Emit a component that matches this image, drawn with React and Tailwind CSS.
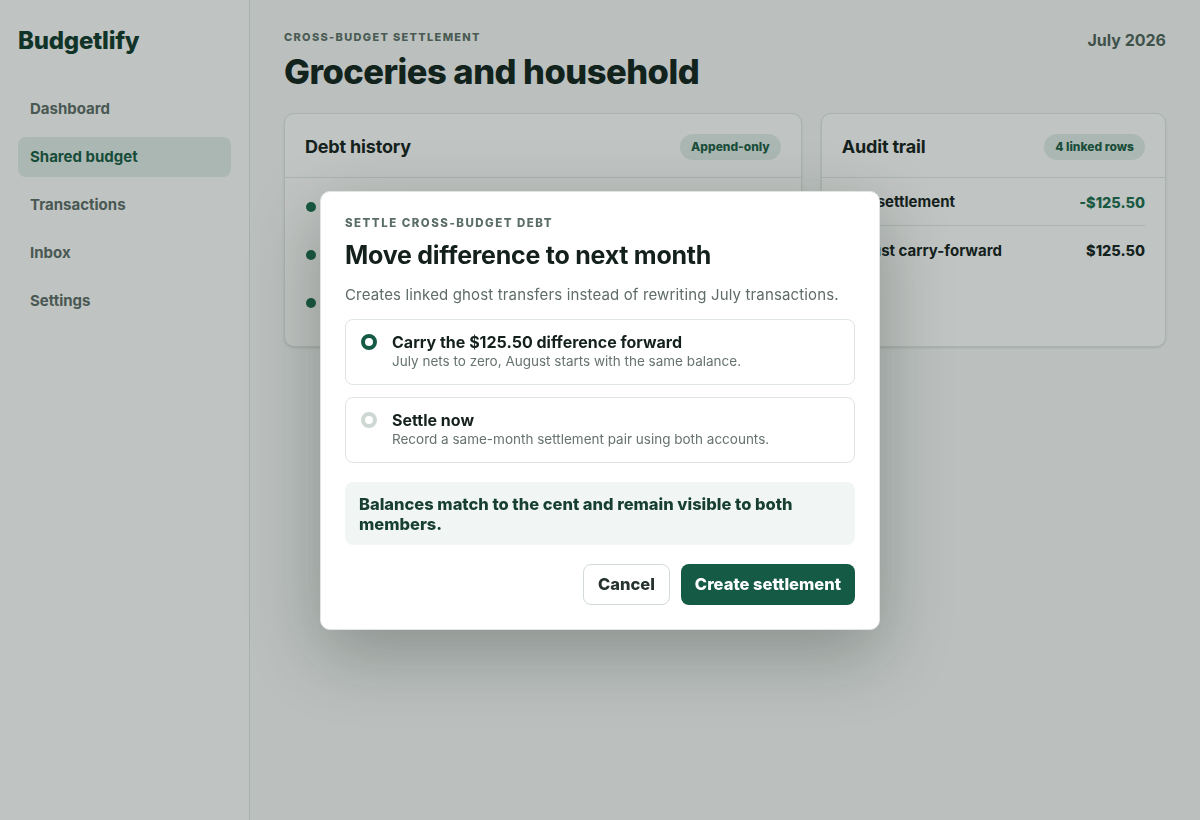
import React, { useState } from 'react';

const navItems = ['Dashboard', 'Shared budget', 'Transactions', 'Inbox', 'Settings'];

const debtRows = ['jul-04', 'jul-12', 'jul-31'];

const auditRows = [
  { label: 'July settlement', amount: '-$125.50', green: true },
  { label: 'August carry-forward', amount: '$125.50', green: false },
];

const options = [
  {
    id: 'carry',
    title: 'Carry the $125.50 difference forward',
    sub: 'July nets to zero, August starts with the same balance.',
  },
  {
    id: 'now',
    title: 'Settle now',
    sub: 'Record a same-month settlement pair using both accounts.',
  },
];

const App = () => {
  const [choice, setChoice] = useState('carry');

  return (
    <div className="relative flex min-h-screen h-[820px] font-['Inter',sans-serif] bg-[#f2f5f3] text-[#13211c] overflow-hidden">
      {/* Sidebar */}
      <aside className="w-[250px] shrink-0 bg-[#f7f9f8] border-r border-[#d9dfdc] px-[18px] pt-[27px]">
        <div className="text-[24px] leading-7 font-extrabold text-[#0e3a2b] tracking-[-0.01em]">Budgetlify</div>
        <nav className="mt-[34px] flex flex-col gap-2">
          {navItems.map((item) => (
            <div
              key={item}
              className={
                item === 'Shared budget'
                  ? 'h-10 flex items-center px-3 rounded-lg bg-[#dde9e3] text-[15px] font-bold text-[#165a42]'
                  : 'h-10 flex items-center px-3 rounded-lg text-[15px] font-bold text-[#5a6a64]'
              }
            >
              {item}
            </div>
          ))}
        </nav>
      </aside>

      {/* Main */}
      <main className="flex-1 px-[34px] pt-[29px]">
        <div className="flex items-start justify-between">
          <div>
            <div className="text-[11px] leading-4 font-extrabold tracking-[0.12em] text-[#5b6e66]">CROSS-BUDGET SETTLEMENT</div>
            <h1 className="mt-[7px] text-[34.5px] leading-10 font-extrabold tracking-[-0.015em] text-[#10231c]">Groceries and household</h1>
          </div>
          <div className="pt-[1px] text-[16px] leading-5 font-bold text-[#4d6259]">July 2026</div>
        </div>

        <div className="mt-[21px] grid grid-cols-[3fr_2fr] gap-[19px]">
          <section className="rounded-[10px] border border-[#dce2df] bg-[#f8faf9] shadow-sm">
            <div className="flex items-center justify-between px-5 h-[64px] pt-[2px] border-b border-[#dce2df]">
              <h2 className="text-[18px] font-bold tracking-[-0.01em] text-[#14211c]">Debt history</h2>
              <span className="px-[11px] h-[26px] flex items-center rounded-full bg-[#dde9e3] text-[12px] font-extrabold text-[#1b5c45]">Append-only</span>
            </div>
            <div className="px-[21px] pt-[5px] pb-[19px]">
              {debtRows.map((id) => (
                <div key={id} className="h-12 flex items-center gap-3">
                  <span className="w-[10px] h-[10px] rounded-full bg-[#1b6b4e]" />
                </div>
              ))}
            </div>
          </section>

          <section className="rounded-[10px] border border-[#dce2df] bg-[#f8faf9] shadow-sm">
            <div className="flex items-center justify-between px-5 h-[64px] pt-[2px] border-b border-[#dce2df]">
              <h2 className="text-[18px] font-bold tracking-[-0.01em] text-[#14211c]">Audit trail</h2>
              <span className="px-[11px] h-[26px] flex items-center rounded-full bg-[#dde9e3] text-[12px] font-extrabold text-[#1b5c45]">4 linked rows</span>
            </div>
            <div className="px-5">
              {auditRows.map((r) => (
                <div key={r.label} className="h-12 pt-[2px] flex items-center justify-between border-b border-[#dce2df] last:border-b-0">
                  <span className="text-[15px] font-bold">{r.label}</span>
                  <span className={r.green ? 'text-[14.5px] font-extrabold text-[#1b6b4e]' : 'text-[14.5px] font-extrabold text-[#13211c]'}>{r.amount}</span>
                </div>
              ))}
            </div>
          </section>
        </div>
      </main>

      {/* Overlay */}
      <div className="fixed inset-0 bg-[#17231e]/25" />

      {/* Modal */}
      <div className="absolute left-[320px] top-[191px] w-[560px] rounded-[10px] bg-white border border-[#e1e6e4] shadow-[0_24px_70px_rgba(10,20,16,0.28)] px-6 pt-[23px] pb-6">
        <div className="text-[11.5px] leading-4 font-extrabold tracking-[0.13em] text-[#5b6e66]">SETTLE CROSS-BUDGET DEBT</div>
        <h3 className="mt-2 text-[25px] leading-8 font-bold text-[#14201c] tracking-[-0.01em]">Move difference to next month</h3>
        <p className="mt-3 text-[15px] leading-6 tracking-[0.01em] text-[#5f6c67]">Creates linked ghost transfers instead of rewriting July transactions.</p>

        <div className="mt-3 flex flex-col gap-3">
          {options.map((o) => {
            const active = choice === o.id;
            return (
              <button
                key={o.id}
                onClick={() => setChoice(o.id)}
                className="w-full text-left flex items-start gap-[15px] rounded-lg border border-[#dfe5e2] bg-white pl-[15px] pr-4 pt-3 pb-[14px]"
              >
                <span
                  className={
                    active
                      ? 'mt-[2px] w-4 h-4 shrink-0 rounded-full border-[4px] border-[#145a44] bg-white'
                      : 'mt-[2px] w-4 h-4 shrink-0 rounded-full border-[4px] border-[#cdd8d3] bg-white'
                  }
                />
                <span className="flex flex-col">
                  <span className="text-[16px] leading-5 font-bold text-[#14201c]">{o.title}</span>
                  <span className="text-[13.5px] leading-[18px] text-[#66736e]">{o.sub}</span>
                </span>
              </button>
            );
          })}
        </div>

        <div className="mt-[19px] rounded-lg bg-[#f1f6f4] px-[14px] pt-3 pb-[11px] text-[16.5px] leading-5 font-extrabold text-[#173f31]">
          Balances match to the cent and remain visible to both members.
        </div>

        <div className="mt-[19px] flex justify-end gap-[11px]">
          <button className="h-[41px] px-[14px] rounded-lg border border-[#d3dbd7] bg-white text-[16.5px] font-extrabold text-[#26332e]">Cancel</button>
          <button className="h-[41px] px-[14px] rounded-lg bg-[#145a44] text-[16.5px] font-extrabold text-white">Create settlement</button>
        </div>
      </div>
    </div>
  );
};

export default App;
